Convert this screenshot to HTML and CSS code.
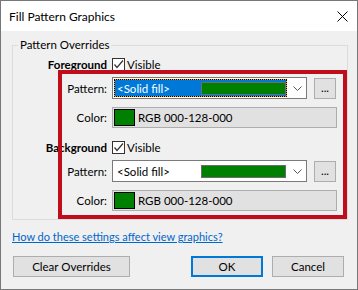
FILE: index.html
```html
<!DOCTYPE html>
<html lang="en">
<head>
  <meta charset="UTF-8">
  <title>Fill Pattern Graphics</title>
  <link rel="stylesheet" href="styles.css">
</head>
<body>
  <div class="window">
    <div class="titlebar">
      <span class="title">Fill Pattern Graphics</span>
      <svg class="close" width="11" height="11" viewBox="0 0 11 11">
        <path d="M0.5 0.5L10.5 10.5M10.5 0.5L0.5 10.5" stroke="#000" stroke-width="1"></path>
      </svg>
    </div>

    <div class="content">
      <fieldset class="group">
        <legend>Pattern Overrides</legend>

        <div class="section">
          <div class="row head">
            <span class="label strong">Foreground</span>
            <label class="check">
              <span class="box">
                <svg width="11" height="11" viewBox="0 0 11 11"><path d="M1.5 5.5L4 8.5L10 1.5" fill="none" stroke="#333" stroke-width="1.2"></path></svg>
              </span>
              Visible
            </label>
          </div>
          <div class="row pattern">
            <span class="label">Pattern:</span>
            <div class="field">
              <div class="select">
                <span class="choice focused">
                  <span>&lt;Solid fill&gt;</span>
                  <span class="bar"></span>
                </span>
                <svg class="chevron" width="9" height="5" viewBox="0 0 9 5"><path d="M0.5 0.5L4.5 4.5L8.5 0.5" fill="none" stroke="#555" stroke-width="1"></path></svg>
              </div>
              <button class="more" type="button">...</button>
            </div>
          </div>
          <div class="row color">
            <span class="label">Color:</span>
            <div class="color-field"><span class="swatch"></span>RGB 000-128-000</div>
          </div>
        </div>

        <div class="section">
          <div class="row head">
            <span class="label strong">Background</span>
            <label class="check">
              <span class="box">
                <svg width="11" height="11" viewBox="0 0 11 11"><path d="M1.5 5.5L4 8.5L10 1.5" fill="none" stroke="#333" stroke-width="1.2"></path></svg>
              </span>
              Visible
            </label>
          </div>
          <div class="row pattern">
            <span class="label">Pattern:</span>
            <div class="field">
              <div class="select">
                <span class="choice">
                  <span>&lt;Solid fill&gt;</span>
                  <span class="bar"></span>
                </span>
                <svg class="chevron" width="9" height="5" viewBox="0 0 9 5"><path d="M0.5 0.5L4.5 4.5L8.5 0.5" fill="none" stroke="#555" stroke-width="1"></path></svg>
              </div>
              <button class="more" type="button">...</button>
            </div>
          </div>
          <div class="row color">
            <span class="label">Color:</span>
            <div class="color-field"><span class="swatch"></span>RGB 000-128-000</div>
          </div>
        </div>
      </fieldset>

      <a class="help" href="#">How do these settings affect view graphics?</a>

      <div class="buttons">
        <button class="btn clear" type="button">Clear Overrides</button>
        <button class="btn ok" type="button">OK</button>
        <button class="btn cancel" type="button">Cancel</button>
      </div>
    </div>

    <!-- callout drawn over the pattern controls -->
    <div class="callout"></div>
  </div>
</body>
</html>
```

FILE: styles.css
```css
* {
  box-sizing: border-box;
}

body {
  margin: 0;
  font-family: Lato, 'Liberation Sans', sans-serif;
  font-size: 11.5px;
  color: #000;
}

.window {
  position: relative;
  width: 358px;
  height: 290px;
  border: 1px solid #777;
  background: #f0f0f0;
  display: flex;
  flex-direction: column;
}

.titlebar {
  height: 30px;
  flex-shrink: 0;
  background: #fff;
  display: flex;
  align-items: center;
  padding: 0 9px 0 8px;
}

.title {
  flex: 1;
  font-size: 12px;
}

.content {
  padding: 6px 9px 0 11px;
}

.group {
  margin: 0;
  padding: 0 0 8px;
  border: 1px solid #dcdcdc;
  min-width: 0;
}

.group legend {
  margin-left: 5px;
  padding: 0 2px;
  line-height: 16px;
}

.section + .section {
  margin-top: 8px;
}

.row {
  display: grid;
  grid-template-columns: 94px 225px;
  column-gap: 5px;
  align-items: center;
}

.row.head {
  height: 22px;
}

.row.pattern {
  height: 22px;
  margin-top: 2px;
}

.row.color {
  height: 21px;
  margin-top: 8px;
}

.label {
  text-align: right;
}

.label.strong {
  font-weight: bold;
}

.check {
  display: flex;
  align-items: center;
  gap: 2px;
}

.box {
  width: 13px;
  height: 13px;
  border: 1px solid #333;
  background: #fff;
  display: flex;
  align-items: center;
  justify-content: center;
}

.field {
  display: flex;
  align-items: center;
  gap: 7px;
}

.select {
  width: 195px;
  height: 22px;
  border: 1px solid #7a7a7a;
  background: #fff;
  display: flex;
  align-items: center;
}

.choice {
  width: 173px;
  height: 18px;
  margin-left: 1px;
  padding: 0 0 0 2px;
  border: 1px solid transparent;
  display: flex;
  align-items: center;
  justify-content: space-between;
}

.choice.focused {
  color: #fff;
  border: 1px dotted #000;
  background: linear-gradient(#0078d7, #0078d7) padding-box, #e8a33a border-box;
}

.bar {
  width: 85px;
  height: 13px;
  background: #008000;
  border: 1px solid #6d6d6d;
}

.chevron {
  margin-left: auto;
  margin-right: 4px;
}

.more {
  width: 22px;
  height: 21px;
  padding: 0;
  border: 1px solid #adadad;
  background: #e1e1e1;
  font: inherit;
  line-height: 18px;
}

.color-field {
  height: 21px;
  border: 1px solid #adadad;
  background: #e1e1e1;
  display: flex;
  align-items: center;
  padding-left: 1px;
}

.swatch {
  width: 21px;
  height: 17px;
  border: 1px solid #000;
  background: #008000;
  margin-right: 3px;
}

.help {
  display: block;
  width: fit-content;
  margin-top: 9px;
  font-size: 11px;
  line-height: 16px;
  color: #0066cc;
}

.buttons {
  display: flex;
  margin-top: 11px;
}

.btn {
  height: 21px;
  padding: 0;
  border: 1px solid #adadad;
  background: #e1e1e1;
  font: inherit;
  color: #000;
}

.btn.clear {
  width: 117px;
  margin-left: 1px;
}

.btn.ok {
  width: 72px;
  margin-left: auto;
  border: 2px solid #0078d7;
}

.btn.cancel {
  width: 72px;
  margin-left: 9px;
  margin-right: 4px;
}

.callout {
  position: absolute;
  left: 57px;
  top: 69px;
  width: 289px;
  height: 149px;
  border: 4px solid #c00d1b;
}
```
